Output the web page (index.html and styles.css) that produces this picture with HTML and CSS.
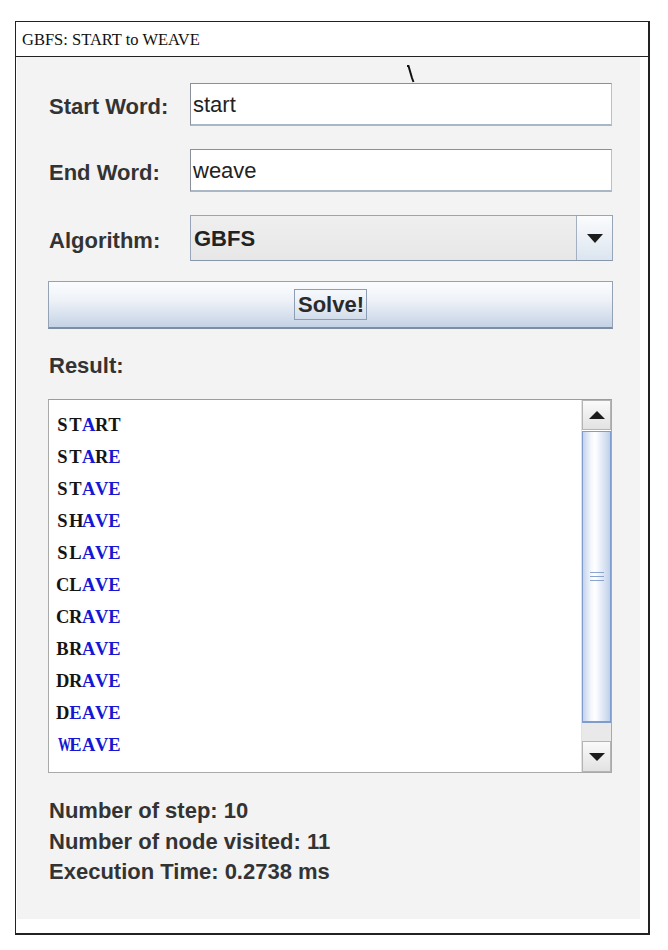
FILE: index.html
```html
<!DOCTYPE html>
<html>
<head>
<meta charset="utf-8">
<title>GBFS: START to WEAVE</title>
<link rel="stylesheet" href="styles.css">
</head>
<body>
<div class="window">
  <div class="titlebar">GBFS: START to WEAVE</div>
  <div class="frame-body">
    <div class="panel">
      <div class="row">
        <span class="lbl">Start Word:</span>
        <div class="field">start</div>
      </div>
      <div class="row row-gap">
        <span class="lbl">End Word:</span>
        <div class="field">weave</div>
      </div>
      <div class="row row-gap combo-row">
        <span class="lbl">Algorithm:</span>
        <div class="combo">
          <span class="combo-value">GBFS</span>
          <span class="combo-btn"><span class="tri-down"></span></span>
        </div>
      </div>
      <div class="solve"><span class="solve-focus">Solve!</span></div>
      <div class="result-lbl">Result:</div>
      <div class="textarea">
        <div class="list">
          <div class="word"><b>S</b><b>T</b><b class="bl">A</b><b>R</b><b>T</b></div>
          <div class="word"><b>S</b><b>T</b><b class="bl">A</b><b>R</b><b class="bl">E</b></div>
          <div class="word"><b>S</b><b>T</b><b class="bl">A</b><b class="bl">V</b><b class="bl">E</b></div>
          <div class="word"><b>S</b><b>H</b><b class="bl">A</b><b class="bl">V</b><b class="bl">E</b></div>
          <div class="word"><b>S</b><b>L</b><b class="bl">A</b><b class="bl">V</b><b class="bl">E</b></div>
          <div class="word"><b>C</b><b>L</b><b class="bl">A</b><b class="bl">V</b><b class="bl">E</b></div>
          <div class="word"><b>C</b><b>R</b><b class="bl">A</b><b class="bl">V</b><b class="bl">E</b></div>
          <div class="word"><b>B</b><b>R</b><b class="bl">A</b><b class="bl">V</b><b class="bl">E</b></div>
          <div class="word"><b>D</b><b>R</b><b class="bl">A</b><b class="bl">V</b><b class="bl">E</b></div>
          <div class="word"><b>D</b><b class="bl">E</b><b class="bl">A</b><b class="bl">V</b><b class="bl">E</b></div>
          <div class="word"><b class="bl wide">W</b><b class="bl">E</b><b class="bl">A</b><b class="bl">V</b><b class="bl">E</b></div>
        </div>
        <div class="scrollbar">
          <div class="sb-btn"><span class="tri-up"></span></div>
          <div class="sb-thumb"><span class="grip"></span></div>
          <div class="sb-track"></div>
          <div class="sb-btn sb-btn-down"><span class="tri-down small"></span></div>
        </div>
      </div>
      <div class="stats">
        <div>Number of step: 10</div>
        <div>Number of node visited: 11</div>
        <div>Execution Time: 0.2738 ms</div>
      </div>
    </div>
  </div>
  <svg class="cursor" width="12" height="20" viewBox="0 0 12 20"><polyline points="2,1 3.5,1 7,13 8.5,17" fill="none" stroke="#111" stroke-width="2"/></svg>
</div>
</body>
</html>
```

FILE: styles.css
```css
html, body {
  margin: 0;
  padding: 0;
  background: #ffffff;
}

body {
  font-family: "Liberation Sans", Arial, sans-serif;
}

.window {
  position: relative;
  margin: 21px 0 0 15px;
  width: 632px;
  height: 911px;
  border: 1px solid #222;
  border-right-width: 2px;
  border-bottom-width: 2px;
  background: #fff;
}

.titlebar {
  height: 34px;
  line-height: 36px;
  border-bottom: 1px solid #222;
  padding-left: 6px;
  font-family: "Liberation Serif", "Times New Roman", serif;
  font-size: 16.5px;
  color: #111;
}

.frame-body {
  height: 876px;
  padding-left: 1px;
}

.panel {
  width: 564px;
  height: 836px;
  padding: 26px 28px 0 31px;
  background-color: #f3f3f3;
  display: flex;
  flex-direction: column;
}

.row {
  display: flex;
  align-items: center;
  height: 43px;
}

.row-gap {
  margin-top: 23px;
}

.combo-row {
  height: 46px;
}

.lbl {
  width: 141px;
  padding-left: 1px;
  padding-top: 5px;
  font-weight: bold;
  font-size: 22px;
  color: #333;
}

.field {
  flex: 1;
  box-sizing: border-box;
  height: 43px;
  background: #fff;
  border-top: 1px solid #8a9099;
  border-left: 1px solid #8a9099;
  border-right: 1px solid #b9c0c9;
  border-bottom: 2px solid #a9b6c6;
  padding-left: 2px;
  font-size: 22px;
  line-height: 41px;
  color: #222;
}

.combo {
  flex: 1;
  height: 46px;
  box-sizing: border-box;
  margin-right: -1px;
  display: flex;
  border: 1px solid #97a5b9;
  border-bottom-color: #8796ab;
  background: linear-gradient(#efefef, #e7e7e7);
}

.combo-value {
  flex: 1;
  padding-left: 3px;
  font-size: 22px;
  font-weight: bold;
  line-height: 45px;
  color: #222;
}

.combo-btn {
  width: 35px;
  border-left: 1px solid #a3b0c2;
  background: linear-gradient(#fbfcfd, #dce5f0);
  display: flex;
  align-items: center;
  justify-content: center;
}

.tri-down {
  width: 0;
  height: 0;
  border-left: 8px solid transparent;
  border-right: 8px solid transparent;
  border-top: 9px solid #1c1c1c;
}

.tri-down.small {
  border-top-width: 8px;
}

.tri-up {
  width: 0;
  height: 0;
  border-left: 8px solid transparent;
  border-right: 8px solid transparent;
  border-bottom: 8px solid #1c1c1c;
}

.solve {
  margin-top: 20px;
  margin-right: -1px;
  height: 48px;
  box-sizing: border-box;
  border: 1px solid #93a2b5;
  border-bottom: 2px solid #7d8da3;
  background: linear-gradient(#fbfcfe 0%, #eef2f8 40%, #c5d3e6 100%);
  display: flex;
  align-items: center;
  justify-content: center;
}

.solve-focus {
  margin-top: -1px;
  padding: 3px 2px 3px 3px;
  border: 1px solid #8c9db4;
  font-size: 22px;
  font-weight: bold;
  line-height: 23px;
  color: #2a2a2a;
}

.result-lbl {
  margin-top: 24px;
  height: 26px;
  line-height: 26px;
  padding-left: 1px;
  font-size: 22px;
  font-weight: bold;
  color: #333;
}

.textarea {
  margin-top: 20px;
  height: 374px;
  box-sizing: border-box;
  border: 1px solid #a9a9a9;
  border-top-color: #9c9c9c;
  background: #fff;
  display: flex;
}

.list {
  flex: 1;
  padding: 9px 0 0 7px;
}

.word {
  height: 32px;
  line-height: 32px;
  display: flex;
}

.word b {
  width: 13px;
  text-align: center;
  font-family: "Liberation Serif", "Times New Roman", serif;
  font-size: 18.5px;
  font-weight: bold;
  color: #141414;
}

.word b.bl {
  color: #1616d4;
}

.word b.wide {
  transform: scaleX(0.7);
}

.scrollbar {
  width: 29px;
  display: flex;
  flex-direction: column;
  border-left: 1px solid #e2e2e2;
}

.sb-btn {
  height: 30px;
  box-sizing: border-box;
  border: 1px solid #b4b4b4;
  background: linear-gradient(#fafafa, #e2e2e2);
  display: flex;
  align-items: center;
  justify-content: center;
}

.sb-btn-down {
  height: 31px;
}

.sb-thumb {
  height: 292px;
  margin-top: 1px;
  box-sizing: border-box;
  border: 1px solid #7f9dcc;
  border-bottom-width: 2px;
  background: linear-gradient(90deg, #c3d3ec 0%, #f4f7fc 30%, #ffffff 45%, #dde6f4 75%, #c0d0ea 100%);
  display: flex;
  align-items: center;
  justify-content: center;
}

.grip {
  width: 14px;
  height: 7px;
  border-top: 1px solid #8aa4cf;
  border-bottom: 1px solid #8aa4cf;
  background: linear-gradient(transparent 3px, #8aa4cf 3px, #8aa4cf 4px, transparent 4px);
}

.sb-track {
  flex: 1;
  background: #e9e9e9;
}

.stats {
  margin-top: 23px;
  padding-left: 1px;
  font-size: 22px;
  font-weight: bold;
  line-height: 30.5px;
  color: #333;
}

.cursor {
  position: absolute;
  left: 389px;
  top: 43px;
}
```
